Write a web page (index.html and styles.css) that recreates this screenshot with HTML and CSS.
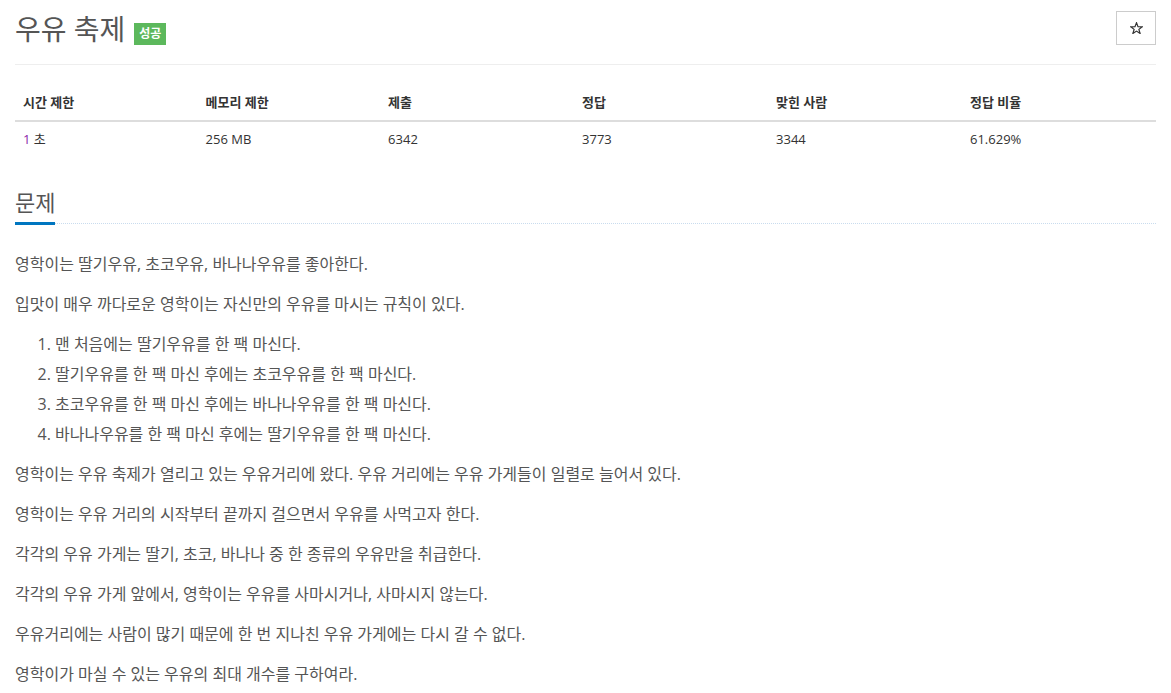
FILE: index.html
```html
<!DOCTYPE html>
<html lang="ko">
<head>
<meta charset="utf-8">
<title>우유 축제</title>
<link rel="stylesheet" href="styles.css">
</head>
<body>
<div class="page">
  <div class="page-header">
    <div class="title-wrap">
      <h1 class="title">우유 축제</h1>
      <span class="badge">성공</span>
    </div>
    <button class="star-btn" type="button" aria-label="즐겨찾기">
      <svg class="star" width="13" height="12" viewBox="0 0 26 24" aria-hidden="true">
        <path d="M13 1.5 L16 9.3 L24.5 9.6 L17.8 14.8 L20.2 23 L13 18.2 L5.8 23 L8.2 14.8 L1.5 9.6 L10 9.3 Z" fill="none" stroke="#333" stroke-width="2.4" stroke-linejoin="miter"/>
      </svg>
    </button>
  </div>

  <table class="info">
    <thead>
      <tr>
        <th class="c1">시간 제한</th>
        <th class="c2">메모리 제한</th>
        <th class="c3">제출</th>
        <th class="c4">정답</th>
        <th class="c5">맞힌 사람</th>
        <th class="c6">정답 비율</th>
      </tr>
    </thead>
    <tbody>
      <tr>
        <td><span class="num">1</span> 초</td>
        <td>256 MB</td>
        <td>6342</td>
        <td>3773</td>
        <td>3344</td>
        <td>61.629%</td>
      </tr>
    </tbody>
  </table>

  <section class="problem">
    <div class="headline"><h2>문제</h2></div>
    <div class="problem-text">
      <p>영학이는 딸기우유, 초코우유, 바나나우유를 좋아한다.</p>
      <p>입맛이 매우 까다로운 영학이는 자신만의 우유를 마시는 규칙이 있다.</p>
      <ol>
        <li>맨 처음에는 딸기우유를 한 팩 마신다.</li>
        <li>딸기우유를 한 팩 마신 후에는 초코우유를 한 팩 마신다.</li>
        <li>초코우유를 한 팩 마신 후에는 바나나우유를 한 팩 마신다.</li>
        <li>바나나우유를 한 팩 마신 후에는 딸기우유를 한 팩 마신다.</li>
      </ol>
      <p>영학이는 우유 축제가 열리고 있는 우유거리에 왔다. 우유 거리에는 우유 가게들이 일렬로 늘어서 있다.</p>
      <p>영학이는 우유 거리의 시작부터 끝까지 걸으면서 우유를 사먹고자 한다.</p>
      <p>각각의 우유 가게는 딸기, 초코, 바나나 중 한 종류의 우유만을 취급한다.</p>
      <p>각각의 우유 가게 앞에서, 영학이는 우유를 사마시거나, 사마시지 않는다.</p>
      <p>우유거리에는 사람이 많기 때문에 한 번 지나친 우유 가게에는 다시 갈 수 없다.</p>
      <p>영학이가 마실 수 있는 우유의 최대 개수를 구하여라.</p>
    </div>
  </section>
</div>
</body>
</html>
```

FILE: styles.css
```css
* {
  box-sizing: border-box;
}

html, body {
  margin: 0;
  padding: 0;
  background: #fff;
}

body {
  font-family: "Open Sans", "Noto Sans CJK KR", sans-serif;
  color: #555;
  font-size: 16px;
}

.page {
  padding: 0 15px;
}

.page-header {
  display: flex;
  justify-content: space-between;
  align-items: flex-start;
  padding-top: 10px;
  height: 65px;
  border-bottom: 1px solid #eee;
  margin-bottom: 19px;
}

.title-wrap {
  display: flex;
  align-items: center;
  gap: 9px;
}

.title {
  margin: 0;
  font-size: 28px;
  font-weight: 400;
  line-height: 38px;
  color: #555;
}

.badge {
  display: inline-block;
  margin-top: 10px;
  height: 22px;
  line-height: 22px;
  padding: 0 5px;
  background: #5cb85c;
  color: #fff;
  font-size: 12px;
  font-weight: 700;
}

.star-btn {
  margin-top: 1px;
  width: 40px;
  height: 34px;
  border: 1px solid #ccc;
  background: #fff;
  padding: 0;
  display: flex;
  align-items: center;
  justify-content: center;
}

.star {
  display: block;
  margin-top: -1px;
}

.info {
  width: 100%;
  border-collapse: collapse;
  font-size: 13px;
  color: #333;
  margin-bottom: 31px;
}

.info th {
  text-align: left;
  font-weight: 700;
  padding: 8px 8px;
  line-height: 20px;
  border-bottom: 2px solid #ddd;
}

.info td {
  padding: 8px 8px;
  line-height: 19px;
}

.c1, .c2 { width: 16%; }
.c3, .c4, .c5, .c6 { width: 17%; }

.num {
  color: #8e24aa;
}

.headline {
  border-bottom: 1px dotted #c9dcee;
}

.headline h2 {
  display: inline-block;
  margin: 0 0 -2px 0;
  font-size: 22px;
  font-weight: 400;
  line-height: 28px;
  padding-bottom: 6px;
  border-bottom: 3px solid #0076c0;
  color: #555;
}

.problem-text {
  padding-top: 25px;
}

.problem-text p {
  margin: 0 0 10px;
  line-height: 30px;
}

.problem-text ol {
  margin: 0 0 10px;
  padding-left: 40px;
}

.problem-text li {
  line-height: 30px;
}
```
